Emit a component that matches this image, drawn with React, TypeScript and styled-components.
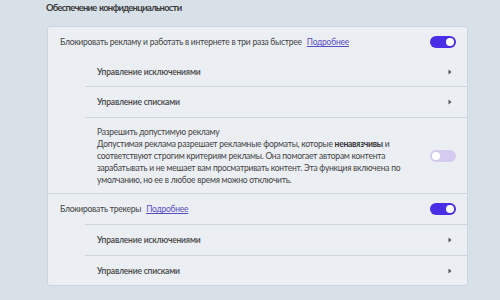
import React from 'react'
import styled, { createGlobalStyle } from 'styled-components'

const GlobalStyle = createGlobalStyle`
	html, body {
		margin: 0;
		padding: 0;
		background: #d8e0e8;
	}
	body {
		font-family: Lato, "Noto Sans", "Liberation Sans", sans-serif;
		color: #3d3d3d;
	}
`

const Page = styled.div`
	width: 500px;
	height: 300px;
	padding: 0 0 0 46px;
	box-sizing: border-box;
	overflow: hidden;
`

const Title = styled.h2`
	margin: 0 0 10px;
	font-size: 9.4px;
	line-height: 16px;
	font-weight: 700;
	color: #3a3a3a;
	letter-spacing: -0.75px;
	word-spacing: 1px;
`

const Card = styled.div`
	margin-left: 1px;
	width: 421px;
	box-sizing: border-box;
	background: #ebeef3;
	border: 1px solid #cfd5dd;
	border-radius: 3px;
`

const Row = styled.div<{ $divider?: boolean }>`
	display: flex;
	align-items: center;
	justify-content: space-between;
	height: 30px;
	padding: 0 11px 0 12px;
	border-top: ${(p) => (p.$divider ? '1px solid #cfd5dd' : 'none')};
	font-size: 8.5px;
	letter-spacing: -0.25px;
`

const SubRow = styled.div<{ $divider?: boolean; $last?: boolean }>`
	display: flex;
	align-items: center;
	justify-content: space-between;
	height: ${(p) => (p.$last ? '29px' : '30px')};
	margin-left: 37px;
	padding: 0 15px 0 12px;
	border-top: ${(p) => (p.$divider ? '1px solid #cfd5dd' : 'none')};
	font-size: 8.5px;
	letter-spacing: -0.2px;
	font-weight: 600;
	color: #454545;
`

const InfoRow = styled.div`
	display: flex;
	align-items: center;
	justify-content: space-between;
	margin-left: 37px;
	padding: 8px 11px 7px 12px;
	border-top: 1px solid #cfd5dd;
	font-size: 8.5px;
	line-height: 12px;
	letter-spacing: -0.25px;
`

const InfoText = styled.div`
	color: #444;
	white-space: nowrap;
	b {
		font-weight: 700;
		color: #333;
	}
`

const Label = styled.span`
	color: #444;
`

const Link = styled.a`
	margin-left: 5px;
	color: #5a4ec6;
	text-decoration: underline;
`

const Switch = styled.div<{ $on?: boolean }>`
	position: relative;
	width: 26px;
	height: 12px;
	border-radius: 6px;
	background: ${(p) => (p.$on ? '#4a2ee6' : '#d4cbf1')};
	flex-shrink: 0;
	&::after {
		content: '';
		position: absolute;
		top: 2px;
		left: ${(p) => (p.$on ? '16px' : '2px')};
		width: 8px;
		height: 8px;
		border-radius: 50%;
		background: #fff;
	}
`

const Chevron = () => (
	<svg width="4" height="6" viewBox="0 0 4 6">
		<path d="M0.5 0.5 L3.5 3 L0.5 5.5 Z" fill="#555" />
	</svg>
)

export default function App() {
	return (
		<Page>
			<GlobalStyle />
			<Title>Обеспечение конфиденциальности</Title>
			<Card>
				<Row>
					<Label>
						Блокировать рекламу и работать в интернете в три раза быстрее
						<Link href="#">Подробнее</Link>
					</Label>
					<Switch $on />
				</Row>
				<SubRow $last>
					Управление исключениями
					<Chevron />
				</SubRow>
				<SubRow $divider>
					Управление списками
					<Chevron />
				</SubRow>
				<InfoRow>
					<InfoText>
						Разрешить допустимую рекламу
						<br />
						Допустимая реклама разрешает рекламные форматы, которые <b>ненавязчивы</b> и
						<br />
						соответствуют строгим критериям рекламы. Она помогает авторам контента
						<br />
						зарабатывать и не мешает вам просматривать контент. Эта функция включена по
						<br />
						умолчанию, но ее в любое время можно отключить.
					</InfoText>
					<Switch />
				</InfoRow>
				<Row $divider>
					<Label>
						Блокировать трекеры
						<Link href="#">Подробнее</Link>
					</Label>
					<Switch $on />
				</Row>
				<SubRow $divider>
					Управление исключениями
					<Chevron />
				</SubRow>
				<SubRow $divider $last>
					Управление списками
					<Chevron />
				</SubRow>
			</Card>
		</Page>
	)
}
